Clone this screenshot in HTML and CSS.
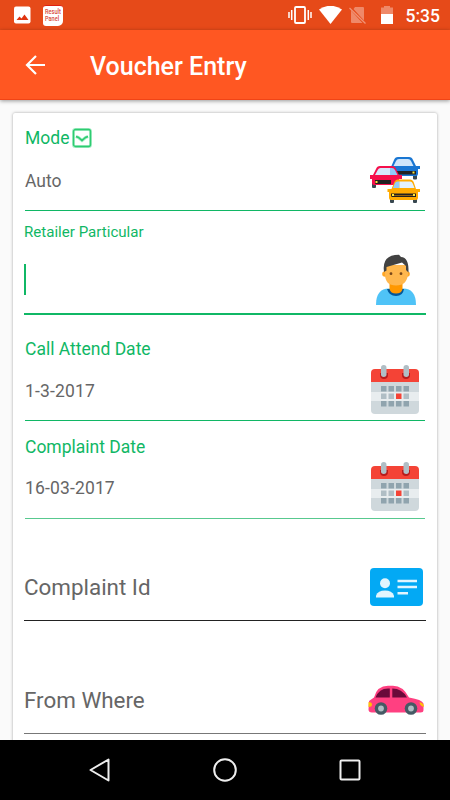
FILE: index.html
```html
<!DOCTYPE html>
<html lang="en">
  <head>
    <meta charset="utf-8" />
    <meta name="viewport" content="width=device-width, initial-scale=1" />
    <title>Voucher Entry</title>
    <link rel="stylesheet" href="styles.css">
  </head>
  <body>
    <div class="status-bar">
      <svg class="status-photo" width="18" height="18" viewBox="0 0 18 18">
        <rect x="1" y="0.5" width="16.500" height="17" rx="2" fill="#fff" />
        <path d="M3.500 14l3-3.500 2 2 3-4 4 5.500z" fill="#e0330f" />
      </svg>
      <div class="result-panel"><span>Result<br />Panel</span></div>

      <svg class="status-vibrate" width="24" height="18" viewBox="0 0 24 18">
        <rect x="7" y="1" width="10" height="16" rx="1" fill="none" stroke="#fff" stroke-width="1.8" />
        <path d="M1 6v6M3.700 4v10M20.300 4v10M23 6v6" stroke="#fff" stroke-width="1.500" />
      </svg>
      <svg class="status-wifi" width="23" height="18" viewBox="0 0 23 18">
        <path d="M0 3.500Q11.500-4 23 3.500L11.500 18z" fill="#fff" />
      </svg>
      <svg class="status-sim" width="18" height="18" viewBox="0 0 18 18">
        <path d="M6 1h8q1 0 1 1v12.500L4.500 3zM2 4.500L13.500 17H3q-1 0-1-1z" fill="#fff" opacity=".35" />
        <path d="M.500 2l16 15.500" stroke="#fff" stroke-width="1.300" opacity=".4" />
      </svg>
      <svg class="status-battery" width="12" height="18" viewBox="0 0 12 18">
        <path d="M0 1.500h3V0h6v1.500h3V8H0z" fill="#fff" opacity=".35" />
        <path d="M0 8h12v10H0z" fill="#fff" />
      </svg>
      <span class="clock">5:35</span>
    </div>

    <header class="app-bar">
      <svg width="20" height="20" viewBox="0 0 20 20" fill="none" stroke="#fff" stroke-width="2.200">
        <path d="M20 10H2M11 1l-9 9 9 9" />
      </svg>
      <h1>Voucher Entry</h1>
    </header>

    <main>
      <div class="card">
        <div class="field mode">
          <div class="field-text">
            <div class="label">
              Mode
              <svg width="20" height="20" viewBox="0 0 20 20" fill="none">
                <rect x="1.500" y="1.500" width="17" height="17" rx="2" stroke="#a5ecc5" stroke-width="3" />
                <rect x="1.500" y="1.500" width="17" height="17" rx="2" stroke="#2ecc71" stroke-width="1.300" />
                <path d="M4 8.500l2.500 1L10 12.500 13.500 9.500 16 8.500" stroke="#a5ecc5" stroke-width="3" />
                <path d="M4 8.500l2.500 1L10 12.500 13.500 9.500 16 8.500" stroke="#2ecc71" stroke-width="1.600" />
              </svg>
            </div>
            <div class="value">Auto</div>
          </div>
          <svg class="icon" width="50" height="46" viewBox="0 0 50 46">
            <path d="M43 18h4v3.500a1 1 0 0 1-1 1h-2a1 1 0 0 1-1-1z" fill="#37474f" />
            <path d="M21 10l3-7q1-3 4-3h11q3 0 4 3l3 6h4v3h-2v5q0 2-2 2H23z" fill="#1976d2" />
            <path d="M23.500 9l2.500-5q.800-2 3-2h9q2 0 3 2l2.500 5z" fill="#cfe6fb" />
            <path d="M27 14h19v3.500H27z" fill="#212121" />
            <path d="M42.500 14.500h2v2h-2z" fill="#ffeb3b" />
            <path d="M2 25h4v5q0 1-1 1H3q-1 0-1-1z" fill="#37474f" />
            <path d="M0 18h3l3-6q1-3 4-3h12q3 0 4 3l3 6h3v4h-3v6H4q-2 0-2-2v-4H0z" fill="#f50f4b" />
            <path d="M5 18l3-5.500q.700-1.500 2.500-1.500H20v7z" fill="#d6eafc" />
            <path d="M20 11h2q2 0 3 2l2.500 5H20z" fill="#90caf9" />
            <path d="M5 23h16v4H6q-1 0-1-1z" fill="#212121" />
            <path d="M5.500 24h2v2h-2z" fill="#ffeb3b" />
            <path d="M20 41h4v4q0 1-1 1h-2q-1 0-1-1zM43 41h4v4q0 1-1 1h-2q-1 0-1-1z" fill="#37474f" />
            <path d="M17.500 32h4l2.500-6q1-3.500 4-3.500h12q3 0 4 3.500l2 6h4v3h-2v6q0 2-2 2H21q-2 0-2-2v-6h-1.500z" fill="#ffab00" />
            <path d="M23 31l2-5q.600-1.500 2.500-1.500h2V31z" fill="#90caf9" />
            <path d="M29.500 24.500H40q2 0 2.700 2L44.500 31h-15z" fill="#e3f2fd" />
            <path d="M21 36.500h25v3.500H22q-1 0-1-2z" fill="#212121" />
            <path d="M24 38.500h19" stroke="#8a6014" />
            <path d="M22 37h2v2h-2zM43 37h2v2h-2z" fill="#ffeb3b" />
          </svg>
        </div>

        <div class="field retailer active">
          <div class="field-text">
            <div class="label">Retailer Particular</div>
            <div class="caret"></div>
          </div>
          <svg class="icon" width="42" height="51" viewBox="0 0 42 51">
            <path d="M1 51Q1 34.500 14 34.500h14Q41 34.500 41 51z" fill="#4fc3f7" />
            <path d="M12 35q2 7 9 7t8-7z" fill="#01579b" />
            <path d="M14.500 28h13v7q-1 4.500-6.500 4.500T14.500 35z" fill="#ff9800" />
            <circle cx="10" cy="20" r="2.800" fill="#ffa726" />
            <circle cx="32" cy="20" r="2.800" fill="#ffa726" />
            <path d="M10 11h23v9q-1 11.500-12 11.500T10 20z" fill="#ffb74d" />
            <path d="M9 18Q6.500.800 24 .800L26 3q8 0 7.500 15.500L31 16v-4l-4-3.500L11.500 13v3.500z" fill="#424242" />
            <circle cx="16" cy="19.700" r="1.400" fill="#784719" />
            <circle cx="26" cy="19.700" r="1.400" fill="#784719" />
          </svg>
        </div>

        <div class="field call-date">
          <div class="field-text">
            <div class="label">Call Attend Date</div>
            <div class="value">1-3-2017</div>
          </div>
          <svg class="icon" width="48" height="49" viewBox="0 0 48 49">
            <path d="M0 15h48v30q0 4-4 4H4q-4 0-4-4z" fill="#cfd8dc" />
            <path d="M0 27h48v9H0z" fill="#e8edef" />
            <path d="M0 17V8q0-4 4-4h40q4 0 4 4v9z" fill="#f44336" />
            <path d="M9 8h8v2a4 4 0 0 1-8 0zM31 8h8v2a4 4 0 0 1-8 0z" fill="#b71c1c" />
            <rect x="10" width="5.500" height="12" rx="2.700" fill="#b0bec5" />
            <rect x="32.500" width="5.500" height="12" rx="2.700" fill="#b0bec5" />
            <path d="M10 21h5.500v5.500H10zM17.500 21H23v5.500h-5.500zM25 21h5.500v5.500H25zM32.500 21H38v5.500h-5.500zM10 36h5.500v5.500H10zM17.500 36H23v5.500h-5.500zM25 36h5.500v5.500H25zM32.500 36H38v5.500h-5.500z" fill="#90a4ae" />
            <path d="M10 28.500h5.500V34H10zM17.500 28.500H23V34h-5.500zM32.500 28.500H38V34h-5.500z" fill="#b0bec5" />
            <path d="M25 28.500h5.500V34H25z" fill="#f44336" />
          </svg>
        </div>

        <div class="field complaint-date">
          <div class="field-text">
            <div class="label">Complaint Date</div>
            <div class="value">16-03-2017</div>
          </div>
          <svg class="icon" width="48" height="49" viewBox="0 0 48 49">
            <path d="M0 15h48v30q0 4-4 4H4q-4 0-4-4z" fill="#cfd8dc" />
            <path d="M0 27h48v9H0z" fill="#e8edef" />
            <path d="M0 17V8q0-4 4-4h40q4 0 4 4v9z" fill="#f44336" />
            <path d="M9 8h8v2a4 4 0 0 1-8 0zM31 8h8v2a4 4 0 0 1-8 0z" fill="#b71c1c" />
            <rect x="10" width="5.500" height="12" rx="2.700" fill="#b0bec5" />
            <rect x="32.500" width="5.500" height="12" rx="2.700" fill="#b0bec5" />
            <path d="M10 21h5.500v5.500H10zM17.500 21H23v5.500h-5.500zM25 21h5.500v5.500H25zM32.500 21H38v5.500h-5.500zM10 36h5.500v5.500H10zM17.500 36H23v5.500h-5.500zM25 36h5.500v5.500H25zM32.500 36H38v5.500h-5.500z" fill="#90a4ae" />
            <path d="M10 28.500h5.500V34H10zM17.500 28.500H23V34h-5.500zM32.500 28.500H38V34h-5.500z" fill="#b0bec5" />
            <path d="M25 28.500h5.500V34H25z" fill="#f44336" />
          </svg>
        </div>

        <div class="field empty complaint-id">
          <div class="placeholder">Complaint Id</div>
          <svg class="icon" width="53" height="38" viewBox="0 0 53 38">
            <rect width="53" height="38" rx="4" fill="#03a9f4" />
            <circle cx="15" cy="15.300" r="5" fill="#e1f5fe" />
            <path d="M6 29.500v-2Q8 22.500 15 22.500t9 5v2z" fill="#e1f5fe" />
            <path d="M27.500 13H47M27.500 19H47M27.500 25.200H38" stroke="#e1f5fe" stroke-width="2.400" />
          </svg>
        </div>

        <div class="field empty from-where">
          <div class="placeholder">From Where</div>
          <svg class="icon" width="56" height="30" viewBox="0 0 56 30">
            <path d="M1 16l5-3.500Q9 .800 20 .800h5Q35 .800 41 12.500q13 2 14.500 6V25q0 2.500-3 2.500H4q-3.500 0-3.500-3z" fill="#ff4081" />
            <path d="M7.500 12.500Q11 3.500 20 3.500h1.800v9zM24.300 3.500Q34 3.500 39 12.500H24.300z" fill="#6a0a3a" />
            <path d="M.500 17q3.500 0 3.500 2.500T.500 22zM55.800 22q-4-1-4.300-5 3.500 1 4.300 3z" fill="#ffc107" />
            <circle cx="13" cy="23.500" r="6.300" fill="#455a64" />
            <circle cx="43" cy="23.500" r="6.300" fill="#455a64" />
            <circle cx="13" cy="23.500" r="2.900" fill="#b0bec5" />
            <circle cx="43" cy="23.500" r="2.900" fill="#b0bec5" />
          </svg>
        </div>
      </div>
    </main>

    <nav class="nav-bar">
      <svg width="24" height="24" viewBox="0 0 24 24"><path d="M2.500 12L20.500 1.500v21z" /></svg>
      <svg width="24" height="24" viewBox="0 0 24 24"><circle cx="12" cy="12" r="10.800" /></svg>
      <svg width="24" height="24" viewBox="0 0 24 24"><rect x="2.500" y="2.500" width="19" height="19" rx="1" /></svg>
    </nav>
  </body>
</html>
```
FILE: styles.css
```css
:root {
  --green: #10b765;
  --orange: #ff5722;
}

* {
  box-sizing: border-box;
}

body {
  margin: 0;
  height: 800px;
  display: flex;
  flex-direction: column;
  overflow: hidden;
  font-family: Roboto, "Liberation Sans", sans-serif;
  background: #fafafa;
}

svg {
  display: block;
  flex-shrink: 0;
}

.status-bar {
  height: 30px;
  flex-shrink: 0;
  display: flex;
  align-items: center;
  padding: 0 10px 0 13px;
  background: #e64a19;
  color: #fff;
}
.result-panel {
  display: flex;
  justify-content: center;
  width: 20px;
  height: 21px;
  margin-left: 12px;
  padding-top: 3px;
  border-top: 1px solid #e02010;
  border-radius: 3px 3px 5px 3px;
  background: #fff;
  color: #d84a3a;
  font-size: 7px;
  line-height: 7px;
  font-weight: 500;
}
.result-panel span {
  transform: scaleX(0.8);
}
.status-vibrate {
  margin-left: auto;
}
.status-wifi {
  margin-left: 7px;
}
.status-sim {
  margin-left: 7px;
}
.status-battery {
  margin-left: 14px;
}
.clock {
  margin: 1px 0 0 13px;
  font-size: 17.5px;
  font-weight: 500;
  line-height: 30px;
}

.app-bar {
  position: relative;
  height: 70px;
  flex-shrink: 0;
  display: flex;
  align-items: center;
  gap: 45px;
  padding-left: 25px;
  background: var(--orange);
  border-bottom: 1px solid #f04416;
  box-shadow: 0 1px 4px rgba(0, 0, 0, 0.4);
}
.app-bar h1 {
  margin: 4px 0 0;
  color: #fff;
  font-size: 25px;
  font-weight: 500;
  line-height: 30px;
}

main {
  height: 640px;
  padding: 13px 13px 0;
  overflow: hidden;
}
.card {
  height: 660px;
  padding: 0 12px;
  border-radius: 2px;
  background: #fff;
  box-shadow: 0 0 3px rgba(0, 0, 0, 0.35);
}

.field {
  display: flex;
  align-items: flex-end;
  justify-content: space-between;
  border-bottom: 1px solid var(--green);
}
.field-text {
  padding-bottom: 17px;
}
.label {
  display: flex;
  align-items: center;
  gap: 3px;
  margin-bottom: 18px;
  color: var(--green);
  font-size: 17.5px;
  line-height: 24px;
}
.value {
  color: #666;
  font-size: 17.5px;
  line-height: 24px;
}
.icon {
  margin: 0 6px 7px 0;
}

.mode {
  height: 98px;
}
.mode .label {
  margin-bottom: 19px;
}
.mode .icon {
  margin-right: 5px;
}

/* focused and empty inputs sit 1px wider than the static rows */
.retailer,
.empty {
  margin: 0 -1px;
}
.retailer {
  height: 104px;
}
.retailer.active {
  border-bottom-width: 2px;
}
.retailer .label {
  margin-bottom: 20px;
  font-size: 15.1px;
}
.retailer .field-text {
  padding-bottom: 18px;
}
.retailer .icon {
  margin: 0 9px 8px 0;
}
.caret {
  width: 2px;
  height: 31px;
  background: var(--green);
}

.call-date {
  height: 106px;
}
.call-date .icon {
  margin-bottom: 6px;
}
.call-date .value,
.complaint-date .value {
  letter-spacing: 0.15px;
}
.complaint-date {
  height: 98px;
  border-bottom-color: #58c98f;
}
.complaint-date .field-text {
  padding-bottom: 18px;
}
.complaint-date .label {
  margin-bottom: 17px;
}

.empty {
  border-bottom-color: #222;
}
.placeholder {
  padding-bottom: 18px;
  color: #666;
  font-size: 22.4px;
  line-height: 30px;
}
.complaint-id {
  height: 102px;
}
.complaint-id .icon {
  margin: 0 3px 14px 0;
}
.from-where {
  height: 113px;
  border-bottom-color: #777;
}
.from-where .icon {
  margin: 0 2px 18px 0;
}

.nav-bar {
  height: 60px;
  flex-shrink: 0;
  display: flex;
  align-items: center;
  justify-content: space-between;
  padding: 0 88px;
  background: #000;
}
.nav-bar svg {
  fill: none;
  stroke: #eee;
  stroke-width: 2;
  stroke-linejoin: round;
}
```
